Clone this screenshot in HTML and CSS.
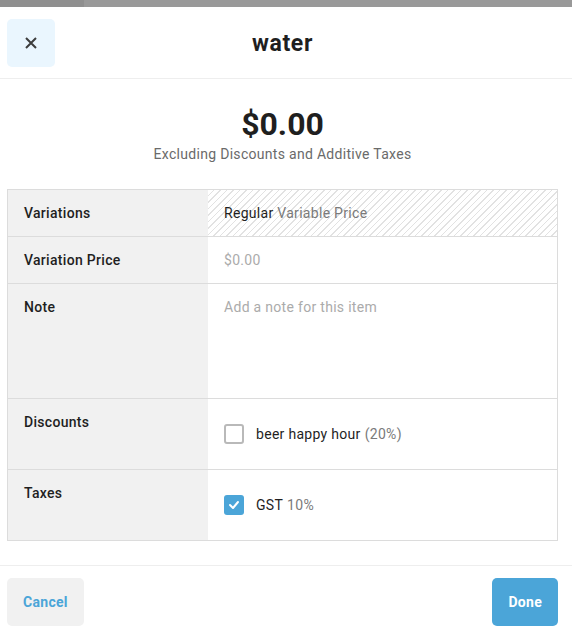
FILE: index.html
```html
<!DOCTYPE html>
<html lang="en">

<head>
    <meta charset="UTF-8">
    <meta name="viewport" content="width=device-width, initial-scale=1.0">
    <title>water</title>

    <link rel="stylesheet" href="styles.css">
</head>

<body>
    <div class="topbar">
        <span class="topbar--progress"></span>
    </div>

    <header class="modal--header">
        <button class="btn-close" title="Close">
            <svg width="14" height="14" viewBox="0 0 14 14">
                <path d="M2 2 L12 12 M12 2 L2 12" stroke="#3d3d3d" stroke-width="2" fill="none" />
            </svg>
        </button>
        <h1 class="modal--title">water</h1>
    </header>

    <main class="modal--body">
        <div class="summary">
            <div class="summary--price">$0.00</div>
            <div class="summary--note">Excluding Discounts and Additive Taxes</div>
        </div>

        <div class="details">
            <div class="details--row">
                <div class="details--label">Variations</div>
                <div class="details--value hatched">Regular <span class="muted">Variable Price</span></div>
            </div>
            <div class="details--row">
                <div class="details--label">Variation Price</div>
                <div class="details--value placeholder">$0.00</div>
            </div>
            <div class="details--row details--row-tall">
                <div class="details--label">Note</div>
                <div class="details--value placeholder">Add a note for this item</div>
            </div>
            <div class="details--row">
                <div class="details--label">Discounts</div>
                <div class="details--value details--value-check">
                    <label class="check">
                        <span class="check--box"></span>
                        beer happy hour <span class="muted">(20%)</span>
                    </label>
                </div>
            </div>
            <div class="details--row">
                <div class="details--label">Taxes</div>
                <div class="details--value details--value-check">
                    <label class="check">
                        <span class="check--box checked">
                            <svg width="12" height="10" viewBox="0 0 12 10">
                                <path d="M2 5 L5 8 L10 2" stroke="#ffffff" stroke-width="2" fill="none" stroke-linecap="round" stroke-linejoin="round" />
                            </svg>
                        </span>
                        GST <span class="muted">10%</span>
                    </label>
                </div>
            </div>
        </div>
    </main>

    <footer class="modal--footer">
        <button class="btn btn-cancel">Cancel</button>
        <button class="btn btn-done">Done</button>
    </footer>
</body>

</html>
```

FILE: styles.css
```css
/* Variables */
:root {
    --color-blue: #4ba5d8;
    --color-text: #1f1f1f;
    --color-muted: #7a7a7a;
    --color-placeholder: #ababab;
    --color-border: #dcdcdc;
    --color-panel: #f1f1f1;
}

/* Base */
* {
    box-sizing: border-box;
}

body {
    margin: 0;
    font-family: Roboto, "Noto Sans", sans-serif;
    color: var(--color-text);
    background: #ffffff;
    letter-spacing: 0.3px;
}

button {
    font-family: inherit;
    letter-spacing: inherit;
    border: 0;
    cursor: pointer;
}

/* Top bar */
.topbar {
    height: 7px;
    background-color: #999999;
}

.topbar--progress {
    display: block;
    width: 84px;
    height: 100%;
    background-color: #8f8f8f;
}

/* Header */
.modal--header {
    display: flex;
    align-items: center;
    padding: 12px 14px 11px 7px;
    border-bottom: 1px solid #eeeeee;
}

.btn-close {
    width: 48px;
    height: 48px;
    display: flex;
    align-items: center;
    justify-content: center;
    background-color: #eaf6fe;
    border-radius: 5px;
}

.modal--title {
    flex: 1;
    margin: 0 48px 0 0;
    text-align: center;
    font-size: 23px;
    font-weight: 700;
    letter-spacing: 0.6px;
}

/* Body */
.modal--body {
    padding: 0 14px 0 7px;
}

.summary {
    text-align: center;
    padding: 26px 0 25px;
}

.summary--price {
    font-size: 32px;
    font-weight: 700;
    line-height: 38px;
    letter-spacing: 0;
}

.summary--note {
    font-size: 14px;
    color: #6a6a6a;
    line-height: 20px;
    margin-top: 1px;
}

.details {
    border: 1px solid var(--color-border);
    border-top: 0;
}

.details--row {
    display: flex;
    border-top: 1px solid var(--color-border);
    font-size: 14px;
    line-height: 18px;
}

.details--label {
    width: 200px;
    flex-shrink: 0;
    padding: 14px 16px;
    background-color: var(--color-panel);
    font-weight: 500;
}

.details--value {
    flex: 1;
    padding: 14px 16px;
}

.details--row-tall {
    height: 115px;
}

.details--value-check {
    padding: 25px 16px;
}

.hatched {
    background-image: repeating-linear-gradient(135deg, transparent 0, transparent 3.6px, #e2e2e2 3.6px, #e2e2e2 4.6px);
}

.muted {
    color: var(--color-muted);
}

.placeholder {
    color: var(--color-placeholder);
}

/* Checkbox */
.check {
    display: flex;
    align-items: center;
    gap: 12px;
    line-height: 20px;
}

.check .muted {
    margin-left: -8px;
}

.check--box {
    width: 20px;
    height: 20px;
    border: 2px solid #b9b9b9;
    border-radius: 3px;
    display: flex;
    align-items: center;
    justify-content: center;
}

.check--box.checked {
    border: 0;
    background-color: var(--color-blue);
}

/* Footer */
.modal--footer {
    display: flex;
    justify-content: space-between;
    margin-top: 24px;
    padding: 12px 14px 10px 7px;
    border-top: 1px solid #eeeeee;
}

.btn {
    height: 48px;
    padding: 0 16px;
    border-radius: 5px;
    font-size: 14px;
    font-weight: 700;
}

.btn-cancel {
    background-color: var(--color-panel);
    color: var(--color-blue);
}

.btn-done {
    background-color: var(--color-blue);
    color: #ffffff;
}
```
